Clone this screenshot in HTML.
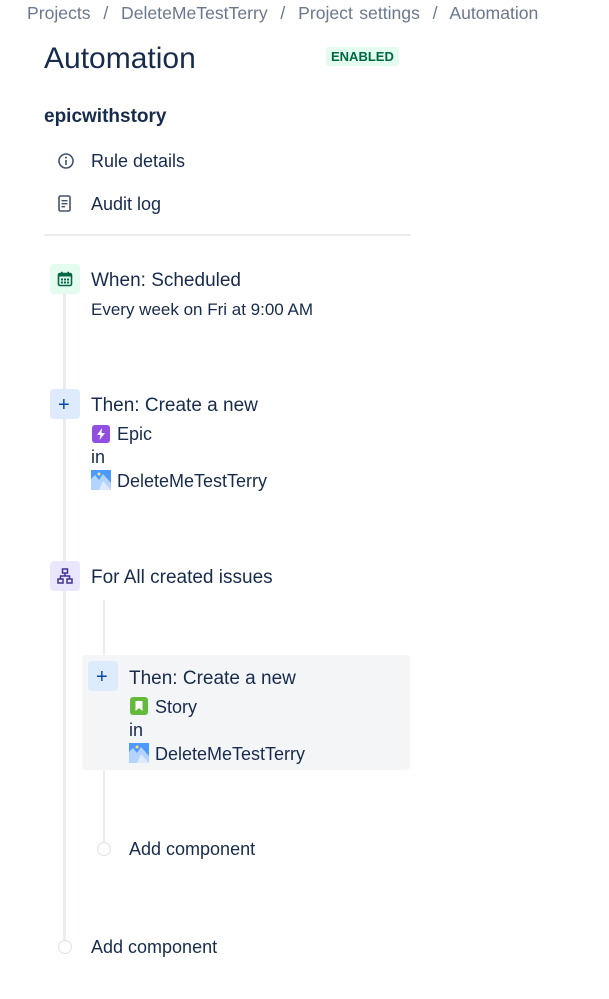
<!DOCTYPE html>
<html><head><meta charset="utf-8"><style>
*{margin:0;padding:0;box-sizing:border-box}
body{width:609px;height:999px;background:#fff;font-family:"Liberation Sans",sans-serif;color:#172b4d;position:relative;overflow:hidden}
.a{position:absolute;white-space:nowrap}
.t{font-size:18px}
.bc{font-size:17.6px;color:#6b778c;top:3px;left:27px;word-spacing:1.5px}
.line{position:absolute;background:#ebecf0;width:3px}
.ib{position:absolute;width:30px;height:30px;border-radius:4px}
.circ{position:absolute;width:14px;height:14px;border:1.5px solid #dfe1e6;border-radius:50%;background:#fff}
</style></head><body>
<div class="a bc">Projects&nbsp; /&nbsp; DeleteMeTestTerry&nbsp; /&nbsp; Project settings&nbsp; /&nbsp; Automation</div>
<div class="a" style="left:44px;top:42px;font-size:30px">Automation</div>
<div class="a" style="left:326px;top:47px;background:#e3fcef;color:#006644;font-weight:bold;font-size:13px;padding:2px 5px;border-radius:3px">ENABLED</div>
<div class="a" style="left:44px;top:106px;font-size:19px;font-weight:bold">epicwithstory</div>
<svg class="a" style="left:57px;top:152px" width="18" height="18" viewBox="0 0 18 18"><circle cx="9" cy="9" r="7" fill="none" stroke="#42526e" stroke-width="1.6"/><rect x="8.2" y="8" width="1.6" height="5" fill="#42526e"/><circle cx="9" cy="5.6" r="1" fill="#42526e"/></svg>
<div class="a t" style="left:91px;top:151px">Rule details</div>
<svg class="a" style="left:58px;top:195px" width="14" height="18" viewBox="0 0 14 18"><rect x="1" y="1" width="11" height="15" rx="1.5" fill="none" stroke="#42526e" stroke-width="1.6"/><rect x="3.5" y="5" width="6" height="1.4" fill="#42526e"/><rect x="3.5" y="8" width="6" height="1.4" fill="#42526e"/><rect x="3.5" y="11" width="3.5" height="1.4" fill="#42526e"/></svg>
<div class="a t" style="left:91px;top:194px">Audit log</div>
<div class="a" style="left:44px;top:234px;width:367px;height:2px;background:#ebecf0"></div>

<div class="line" style="left:63px;top:290px;height:652px"></div>
<div class="line" style="left:103px;top:600px;height:242px;width:2px"></div>

<div class="ib" style="left:50px;top:264px;background:#e3fcef"></div>
<svg class="a" style="left:57px;top:271px" width="16" height="16" viewBox="0 0 16 16"><rect x="1.5" y="2.5" width="13" height="12" rx="1.5" fill="none" stroke="#006644" stroke-width="1.6"/><rect x="1.5" y="2.5" width="13" height="3" fill="#006644"/><rect x="4" y="0.8" width="1.6" height="3" fill="#006644"/><rect x="10.4" y="0.8" width="1.6" height="3" fill="#006644"/><g fill="#006644"><rect x="4" y="7.5" width="2" height="2"/><rect x="7" y="7.5" width="2" height="2"/><rect x="10" y="7.5" width="2" height="2"/><rect x="4" y="10.5" width="2" height="2"/><rect x="7" y="10.5" width="2" height="2"/><rect x="10" y="10.5" width="2" height="2"/></g></svg>
<div class="a" style="left:91px;top:270px;font-size:19px">When: Scheduled</div>
<div class="a" style="left:91px;top:300px;font-size:17px">Every week on Fri at 9:00 AM</div>

<div class="ib" style="left:50px;top:389px;background:#deebff"></div>
<div class="a" style="left:58px;top:394px;font-size:20px;color:#0747a6">+</div>
<div class="a" style="left:91px;top:395px;font-size:19px">Then: Create a new</div>
<svg class="a" style="left:92px;top:425px" width="18" height="18" viewBox="0 0 18 18"><rect width="18" height="18" rx="3" fill="#904ee2"/><path d="M10 3L5 10h3.5L7.5 15 13 8H9.5z" fill="#fff"/></svg>
<div class="a t" style="left:117px;top:424px">Epic</div>
<div class="a t" style="left:91px;top:447px">in</div>
<svg class="a" style="left:91px;top:470px" width="20" height="20" viewBox="0 0 20 20"><rect width="20" height="20" fill="#4c9aff"/><path d="M0 20V9l4-4 4 5 4-6 8 9v7z" fill="#b3d4ff"/><path d="M8 20l4-9 8 9z" fill="#deebff"/><circle cx="8" cy="4" r="1.5" fill="#ffe380"/></svg>
<div class="a t" style="left:117px;top:471px">DeleteMeTestTerry</div>

<div class="ib" style="left:50px;top:561px;background:#eae6ff"></div>
<svg class="a" style="left:57px;top:568px" width="16" height="16" viewBox="0 0 16 16" fill="none" stroke="#403294" stroke-width="1.5"><rect x="5.5" y="1" width="5" height="4"/><rect x="1" y="11" width="5" height="4"/><rect x="10" y="11" width="5" height="4"/><path d="M8 5v3M3.5 11V8h9v3"/></svg>
<div class="a" style="left:91px;top:567px;font-size:19px">For All created issues</div>

<div class="a" style="left:82px;top:655px;width:328px;height:115px;background:#f4f5f7;border-radius:4px"></div>
<div class="ib" style="left:88px;top:661px;background:#deebff"></div>
<div class="a" style="left:96px;top:666px;font-size:20px;color:#0747a6">+</div>
<div class="a" style="left:129px;top:668px;font-size:19px">Then: Create a new</div>
<svg class="a" style="left:130px;top:697px" width="18" height="18" viewBox="0 0 18 18"><rect width="18" height="18" rx="3" fill="#63ba3c"/><path d="M5.5 4h7v10l-3.5-3-3.5 3z" fill="#fff"/></svg>
<div class="a t" style="left:155px;top:697px">Story</div>
<div class="a t" style="left:129px;top:720px">in</div>
<svg class="a" style="left:129px;top:743px" width="20" height="20" viewBox="0 0 20 20"><rect width="20" height="20" fill="#4c9aff"/><path d="M0 20V9l4-4 4 5 4-6 8 9v7z" fill="#b3d4ff"/><path d="M8 20l4-9 8 9z" fill="#deebff"/><circle cx="8" cy="4" r="1.5" fill="#ffe380"/></svg>
<div class="a t" style="left:155px;top:744px">DeleteMeTestTerry</div>

<div class="circ" style="left:97px;top:842px"></div>
<div class="a t" style="left:129px;top:839px">Add component</div>
<div class="circ" style="left:58px;top:940px"></div>
<div class="a t" style="left:91px;top:937px">Add component</div>
</body></html>
